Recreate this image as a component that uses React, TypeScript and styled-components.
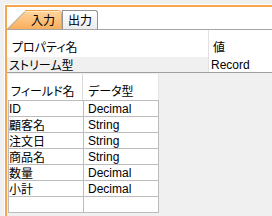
import React from "react";
import styled, { createGlobalStyle } from "styled-components";

const GlobalStyle = createGlobalStyle`
  html, body { margin: 0; padding: 0; background: #f0f0f0; }
  body {
    font-family: "Liberation Sans", "Noto Sans CJK JP", sans-serif;
    font-size: 12px;
    color: #000;
  }
`;

const Root = styled.div`
  width: 272px;
  height: 216px;
  overflow: hidden;
  box-sizing: border-box;
  padding: 4px 0 0 4px;
  display: flex;
`;

const Outer = styled.div`
  flex: 1;
  display: flex;
  border-top: 1px solid #ffffff;
  border-left: 1px solid #ffffff;
`;

const Frame = styled.div`
  flex: 1;
  display: flex;
  flex-direction: column;
  border-top: 2px solid #f7a64e;
  border-left: 2px solid #f7a64e;
  background: #f0f0f0;
`;

const TabStrip = styled.div`
  height: 23px;
  box-sizing: border-box;
  background: #ffffff;
  display: flex;
  align-items: flex-end;
  border-bottom: 1px solid #a5a5a5;
`;

const ActiveTab = styled.div`
  position: relative;
  width: 55px;
  height: 19px;
  display: flex;
  align-items: center;
  justify-content: flex-end;
  padding-right: 7px;
  box-sizing: border-box;
`;

const TabShape = styled.svg`
  position: absolute;
  left: 0;
  top: 0;
`;

const TabLabel = styled.span`
  position: relative;
  font-family: "Noto Sans CJK JP", sans-serif;
  font-size: 12px;
  line-height: 14px;
  font-feature-settings: "palt";
`;

const Tab = styled.div`
  width: 36px;
  height: 19px;
  box-sizing: border-box;
  border: 1px solid #949494;
  border-bottom: none;
  border-top-right-radius: 3px;
  background: linear-gradient(#ffffff, #ececec);
  display: flex;
  align-items: center;
  padding-left: 5px;
`;

const PropGrid = styled.div`
  background: #ffffff;
  border-bottom: 1px solid #a0a0a0;
`;

const PropRow = styled.div<{ $h: number }>`
  display: grid;
  grid-template-columns: 202px 1fr;
  height: ${(p) => p.$h}px;
`;

const PropCell = styled.div<{ $bg?: string; $pl?: number; $pt?: number; $divider?: boolean }>`
  background: ${(p) => p.$bg || "#ffffff"};
  padding-left: ${(p) => p.$pl ?? 4}px;
  padding-top: ${(p) => p.$pt ?? 0}px;
  box-sizing: border-box;
  display: flex;
  align-items: ${(p) => (p.$pt ? "flex-start" : "center")};
  white-space: nowrap;
  overflow: hidden;
  border-right: ${(p) => (p.$divider ? "1px solid #e2e2e2" : "none")};
`;

const JP = styled.span`
  font-family: "Noto Sans CJK JP", sans-serif;
  font-feature-settings: "palt";
  font-size: 12px;
  line-height: 14px;
`;

const Latin = styled.span`
  font-family: "Liberation Sans", Arial, sans-serif;
  font-size: 12px;
  line-height: 14px;
`;

const Content = styled.div`
  flex: 1;
  padding: 1px 0 0 1px;
`;

const DataGrid = styled.div`
  width: 151px;
  display: flex;
  flex-direction: column;
`;

const GridHeader = styled.div`
  display: grid;
  grid-template-columns: 75px 76px;
  height: 27px;
  box-sizing: border-box;
  background: #ffffff;
  border-bottom: 1px solid #bcbcbc;
`;

const HeaderCell = styled.div<{ $last?: boolean }>`
  display: flex;
  align-items: flex-start;
  padding-top: 10px;
  padding-left: ${(p) => (p.$last ? 5 : 3)}px;
  border-right: 1px solid ${(p) => (p.$last ? "#e4e4e4" : "#dadada")};
  white-space: nowrap;
  overflow: hidden;
`;

const GridRow = styled.div`
  display: grid;
  grid-template-columns: 75px 76px;
  height: 16px;
  box-sizing: border-box;
  background: #ffffff;
  border-bottom: 1px solid #bcbcbc;
  border-left: 1px solid #bcbcbc;
  border-right: 1px solid #bcbcbc;
`;

const Cell = styled.div<{ $first?: boolean }>`
  display: flex;
  align-items: center;
  padding-left: ${(p) => (p.$first ? 0 : 4)}px;
  border-right: ${(p) => (p.$first ? "1px solid #bcbcbc" : "none")};
  white-space: nowrap;
  overflow: hidden;
`;

const fields: [string, string][] = [
  ["ID", "Decimal"],
  ["顧客名", "String"],
  ["注文日", "String"],
  ["商品名", "String"],
  ["数量", "Decimal"],
  ["小計", "Decimal"],
  ["", ""],
];

const isLatin = (s: string) => /^[\x00-\x7f]*$/.test(s);

const Txt: React.FC<{ t: string }> = ({ t }) =>
  isLatin(t) ? <Latin>{t}</Latin> : <JP>{t}</JP>;

export default function App() {
  return (
    <>
      <GlobalStyle />
      <Root>
        <Outer>
          <Frame>
            <TabStrip>
              <ActiveTab>
                <TabShape width="55" height="19" viewBox="0 0 55 19">
                  <defs>
                    <linearGradient id="tabg" x1="0" y1="0" x2="0" y2="1">
                      <stop offset="0" stopColor="#ffd49c" />
                      <stop offset="1" stopColor="#f8ae5c" />
                    </linearGradient>
                  </defs>
                  <path
                    d="M0.5 19 L18 1.5 L51.5 1.5 Q54.5 1.5 54.5 4.5 L54.5 19 Z"
                    fill="url(#tabg)"
                  />
                  <path d="M0.5 19 L18 1.5" stroke="#9a9a9a" strokeWidth="1" fill="none" />
                  <path
                    d="M18 0.5 L51.5 0.5 Q54.5 0.5 54.5 3.5 L54.5 19"
                    stroke="#f0a04c"
                    strokeWidth="1"
                    fill="none"
                  />
                </TabShape>
                <TabLabel>入力</TabLabel>
              </ActiveTab>
              <Tab>
                <TabLabel>出力</TabLabel>
              </Tab>
            </TabStrip>
            <PropGrid>
              <PropRow $h={27}>
                <PropCell $divider $pl={5} $pt={10}>
                  <JP>プロパティ名</JP>
                </PropCell>
                <PropCell $pl={4} $pt={10}>
                  <JP>値</JP>
                </PropCell>
              </PropRow>
              <PropRow $h={15}>
                <PropCell $bg="#f0f0f0" $divider $pl={2}>
                  <JP>ストリーム型</JP>
                </PropCell>
                <PropCell $pl={2}>
                  <Latin>Record</Latin>
                </PropCell>
              </PropRow>
            </PropGrid>
            <Content>
              <DataGrid>
                <GridHeader>
                  <HeaderCell>
                    <JP>フィールド名</JP>
                  </HeaderCell>
                  <HeaderCell $last>
                    <JP>データ型</JP>
                  </HeaderCell>
                </GridHeader>
                {fields.map(([n, t], i) => (
                  <GridRow key={i}>
                    <Cell $first>
                      <Txt t={n} />
                    </Cell>
                    <Cell>
                      <Txt t={t} />
                    </Cell>
                  </GridRow>
                ))}
              </DataGrid>
            </Content>
          </Frame>
        </Outer>
      </Root>
    </>
  );
}
